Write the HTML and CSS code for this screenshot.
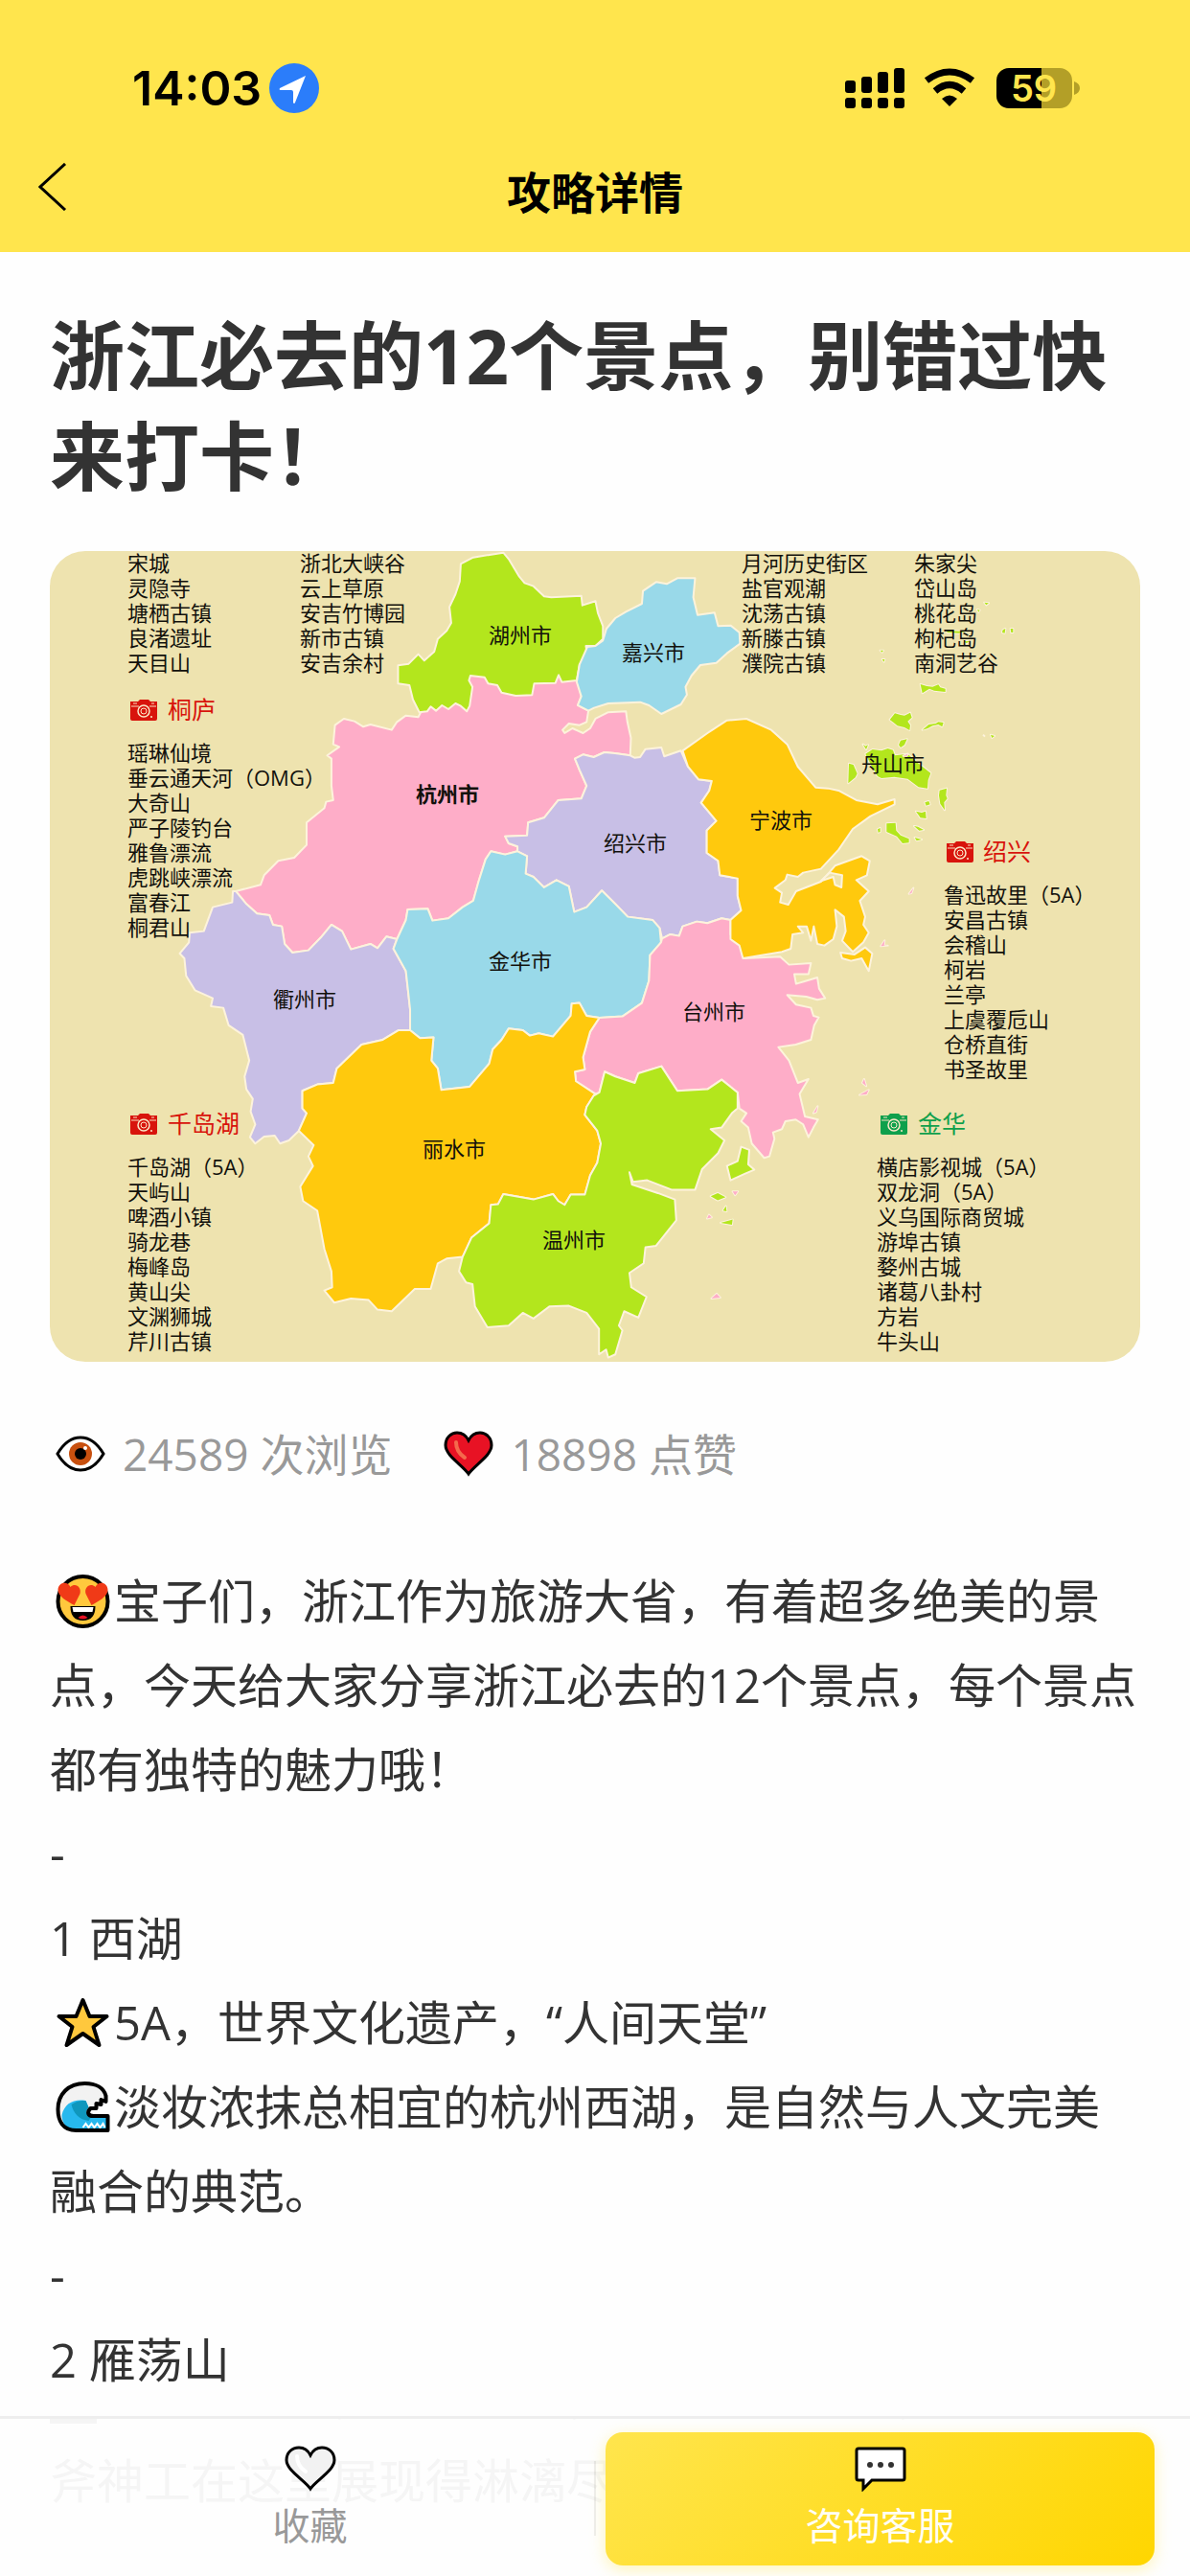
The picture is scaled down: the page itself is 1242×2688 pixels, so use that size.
FILE: index.html
```html
<!DOCTYPE html>
<html lang="zh-CN">
<head>
    <meta charset="UTF-8">
    <meta name="viewport" content="width=device-width, initial-scale=1.0">
    <title>攻略详情</title>
    <link rel="stylesheet" href="styles.css">
</head>
<body>
<div class="page">
    <header class="header">
        <div class="status-bar">
            <div class="status-left">
                <span class="time">14:03</span>
                <svg class="location-icon" viewBox="0 0 52 52">
                    <circle cx="26" cy="26" r="26" fill="#2b7dfa"/>
                    <path d="M38 13L11 26q-1 2 1 2h11q2 0 2 2v11q1 2 2 0z" fill="#fff"/>
                </svg>
            </div>
            <svg class="status-icons" viewBox="0 0 246 46">
                <g fill="#000">
                    <rect x="0" y="15" width="11" height="13" rx="3"/>
                    <rect x="17" y="11" width="11" height="17" rx="3"/>
                    <rect x="34" y="6" width="11" height="22" rx="3"/>
                    <rect x="51" y="2" width="11" height="26" rx="3"/>
                    <rect x="0" y="33" width="11" height="11" rx="3"/>
                    <rect x="17" y="33" width="11" height="11" rx="3"/>
                    <rect x="34" y="33" width="11" height="11" rx="3"/>
                    <rect x="51" y="33" width="11" height="11" rx="3"/>
                    <path d="M109 42l-8-8q8-7 16 0z"/>
                </g>
                <g fill="none" stroke="#000" stroke-width="7">
                    <path d="M85 15q24-18 48 0"/>
                    <path d="M94 26q15-13 30 0"/>
                </g>
                <path d="M171 2h34v42h-34a13 13 0 0 1-13-13v-16a13 13 0 0 1 13-13z" fill="#000"/>
                <path d="M205 2h19a13 13 0 0 1 13 13v16a13 13 0 0 1-13 13h-19zM239 16q6 2 6 7t-6 7z" fill="#b39f27"/>
                <text class="battery-text" x="197" y="37" text-anchor="middle">59</text>
            </svg>
        </div>
        <div class="nav-bar">
            <button type="button" class="back-btn" aria-label="返回">
                <svg viewBox="0 0 30 50"><path d="M28 1L2 25l26 24" fill="none" stroke="#000" stroke-width="3"/></svg>
            </button>
            <span class="nav-title">攻略详情</span>
        </div>
    </header>

    <main class="content">
        <h1 class="title">浙江必去的12个景点，别错过快来打卡！</h1>

        <svg class="map" viewBox="52 575 1138 846" role="img" aria-label="浙江景点地图">
            <defs>
                <symbol id="camera" viewBox="0 0 28 22">
                    <path d="M0 2h8l2-2h9l2 2h7v18q0 2-2 2h-24q-2 0-2-2z" fill="currentColor"/>
                    <path d="M1 7h8m11 0h7M3 4h4m15 0h3" stroke="#f8e0c0" stroke-width="1"/>
                    <circle cx="14" cy="12" r="6" fill="none" stroke="#fbe9c9" stroke-width="1.5"/>
                    <circle cx="14" cy="12" r="3" fill="none" stroke="#fbe9c9"/>
                    <circle cx="22" cy="18" r="1" fill="#fbe9c9"/>
                </symbol>
            </defs>
            <rect x="52" y="575" width="1138" height="846" fill="#eee3af"/>

            <g class="regions" transform="translate(50 570) scale(.3699 .3333)">
                <!-- 杭州 -->
                <path class="pink" d="M805 620L810 560 835 540 865 548 890 565 910 558 970 575 985 550 1010 530 1045 535 1052 520 1090 460 1200 390 1490 400 1505 470 1495 498 1525 515 1520 550 1500 560 1470 555 1452 575 1458 585 1480 570 1510 585 1530 570 1545 540 1580 520 1631 517 1635 550 1645 600 1643 655 1600 648 1570 645 1540 660 1510 652 1487 665 1500 700 1520 750 1505 790 1440 795 1400 850 1355 865 1352 905 1290 908 1300 930 1325 940 1325 955 1290 965 1250 955 1235 980 1215 1050 1200 1110 1170 1130 1130 1165 1085 1172 1072 1135 1015 1137 1010 1170 985 1230 955 1222 930 1258 910 1245 855 1262 830 1205 800 1185 770 1225 735 1265 690 1272 668 1245 660 1190 635 1185 625 1155 590 1150 560 1120 530 1080 600 1060 610 1030 650 985 695 975 730 935 730 865 780 820 785 800 805 795 800 750 800 665 788 655 822 628z"/>
                <!-- 湖州 -->
                <path class="green" d="M1165 55L1200 35 1285 20 1300 40 1330 95 1345 115 1370 125 1400 157 1420 160 1505 155 1508 185 1545 172 1552 210 1566 250 1566 290 1545 312 1518 312 1522 340 1500 370 1492 420 1450 425 1441 403 1432 428 1372 430 1366 466 1320 468 1280 458 1268 435 1242 430 1232 410 1192 405 1188 420 1198 440 1190 500 1182 517 1165 500 1150 492 1130 510 1112 498 1095 515 1080 502 1070 517 1048 520 1030 480 1020 435 988 430 988 373 1018 368 1045 338 1062 358 1090 330 1100 290 1125 265 1138 240 1133 190 1150 150 1162 110z"/>
                <!-- 嘉兴 -->
                <path class="blue" d="M1576 258L1601 225 1631 205 1676 180 1679 140 1716 112 1746 118 1776 100 1826 100 1821 160 1833 215 1881 208 1891 250 1926 248 1951 270 1953 305 1916 335 1886 365 1841 372 1816 405 1799 440 1803 465 1786 495 1731 525 1696 498 1671 488 1581 492 1541 506 1525 515 1495 498 1505 470 1492 425 1500 370 1522 315 1545 312 1566 295z"/>
                <!-- 绍兴 -->
                <path class="purple" d="M1487 665L1510 652 1540 660 1570 645 1600 648 1643 655 1655 662 1671 660 1686 635 1731 630 1739 658 1786 640 1806 690 1836 730 1873 735 1866 765 1843 803 1886 860 1859 890 1859 960 1891 985 1896 1030 1946 1040 1946 1095 1956 1140 1926 1170 1901 1165 1861 1180 1831 1175 1791 1190 1781 1220 1756 1215 1733 1228 1726 1195 1706 1170 1636 1160 1601 1120 1563 1078 1520 1130 1485 1145 1470 1065 1435 1045 1400 1068 1370 1035 1348 1025 1352 970 1325 955 1325 940 1300 930 1290 908 1352 905 1355 865 1400 850 1440 795 1505 790 1520 750 1500 700z"/>
                <!-- 衢州 -->
                <path class="purple" d="M530 1080L560 1120 590 1150 625 1155 635 1185 660 1190 668 1245 690 1272 735 1265 770 1225 800 1185 830 1205 855 1262 910 1245 930 1258 955 1222 985 1230 975 1260 1010 1330 1015 1380 1022 1450 1022 1515 990 1515 945 1545 885 1560 815 1635 805 1680 760 1685 718 1705 718 1760 730 1775 708 1830 680 1860 655 1870 640 1845 610 1848 585 1870 570 1850 585 1810 572 1770 578 1730 560 1700 555 1660 568 1610 550 1530 510 1500 495 1445 460 1440 465 1415 415 1390 390 1345 385 1290 372 1275 398 1240 400 1210 440 1205 465 1130 520 1115 522 1080z"/>
                <!-- 金华 -->
                <path class="blue" d="M1250 955L1290 965 1325 955 1352 970 1348 1025 1370 1035 1400 1068 1435 1045 1470 1065 1485 1145 1520 1130 1563 1078 1601 1120 1636 1160 1706 1170 1726 1195 1730 1240 1699 1280 1696 1360 1676 1430 1621 1472 1556 1476 1520 1470 1500 1430 1478 1432 1475 1470 1425 1535 1385 1525 1360 1532 1340 1515 1300 1510 1280 1545 1255 1575 1245 1620 1190 1692 1110 1702 1100 1635 1082 1610 1088 1538 1050 1540 1022 1515 1022 1450 1015 1380 1010 1330 975 1260 985 1230 1010 1170 1015 1137 1072 1135 1085 1172 1130 1165 1170 1130 1200 1110 1215 1050 1235 980z"/>
                <!-- 台州 -->
                <path class="pink" d="M1556 1476L1621 1472 1676 1430 1696 1360 1699 1280 1730 1240 1733 1228 1756 1215 1781 1220 1791 1190 1831 1175 1861 1180 1901 1165 1926 1170 1926 1215 1950 1240 1966 1290 2066 1285 2091 1310 2153 1305 2146 1340 2106 1340 2111 1370 2135 1362 2171 1350 2176 1385 2193 1415 2171 1420 2140 1410 2086 1405 2111 1435 2153 1445 2160 1470 2175 1475 2162 1500 2153 1545 2110 1560 2061 1568 2091 1610 2116 1680 2146 1668 2121 1715 2136 1785 2173 1795 2160 1820 2146 1850 2131 1810 2110 1795 2081 1800 2071 1825 2046 1835 2050 1855 2036 1910 2021 1915 1986 1870 1976 1820 1956 1800 1971 1775 1951 1760 1946 1710 1901 1670 1861 1700 1776 1705 1731 1628 1666 1650 1656 1680 1601 1660 1571 1645 1556 1710 1545 1715 1490 1675 1487 1645 1515 1638 1510 1600 1530 1520z"/>
                <!-- 丽水 -->
                <path class="orange" d="M1022 1515L1050 1540 1088 1538 1082 1610 1100 1635 1110 1702 1190 1692 1245 1620 1255 1575 1280 1545 1300 1510 1340 1515 1360 1532 1385 1525 1425 1535 1475 1470 1478 1432 1500 1430 1520 1470 1556 1476 1530 1520 1510 1600 1515 1638 1487 1645 1490 1675 1545 1715 1540 1720 1520 1755 1515 1780 1550 1830 1560 1870 1550 1930 1530 1970 1515 2030 1475 2030 1458 2062 1440 2050 1425 2028 1370 2045 1285 2028 1270 2060 1250 2062 1245 2120 1195 2165 1170 2225 1125 2230 1100 2245 1080 2325 1035 2325 970 2395 930 2390 905 2360 855 2355 808 2368 780 2330 802 2320 800 2270 780 2200 760 2080 720 2050 712 2005 748 1940 735 1910 750 1875 708 1830 730 1775 718 1760 718 1705 760 1685 805 1680 815 1635 885 1560 945 1545 990 1515z"/>
                <!-- 温州 -->
                <path class="green" d="M1571 1645L1601 1660 1656 1680 1666 1650 1731 1628 1776 1705 1861 1700 1901 1670 1946 1710 1946 1760 1930 1775 1901 1820 1870 1825 1909 1860 1891 1900 1846 1950 1826 2015 1761 2015 1691 1985 1651 1990 1641 1960 1648 1998 1721 2025 1769 2045 1773 2110 1716 2190 1686 2195 1681 2245 1641 2275 1646 2320 1689 2350 1666 2415 1626 2395 1611 2440 1621 2455 1601 2530 1581 2540 1575 2515 1555 2530 1555 2450 1520 2400 1470 2378 1415 2380 1370 2418 1340 2400 1300 2440 1240 2445 1205 2380 1198 2310 1180 2305 1160 2270 1170 2225 1195 2165 1245 2120 1250 2062 1270 2060 1285 2028 1370 2045 1425 2028 1440 2050 1458 2062 1475 2030 1515 2030 1530 1970 1550 1930 1560 1870 1550 1830 1515 1780 1520 1755 1540 1720 1556 1710z"/>
                <path class="green" d="M1956 1880L1979 1890 1976 1935 1993 1952 1966 1965 1926 1985 1916 1940 1946 1925z"/>
                <!-- 宁波 -->
                <g transform="translate(1541)">
                    <path class="orange" d="M250 640L320 585 375 545 430 540 500 575 545 620 575 690 625 755 660 758 690 765 740 795 800 808 848 792 848 808 780 845 730 885 690 950 640 1010 590 1022 575 1035 545 1028 540 1045 510 1070 530 1085 525 1115 548 1122 570 1080 640 1050 665 1020 680 1000 755 970 778 985 770 1030 740 1045 760 1065 775 1080 750 1110 765 1160 760 1185 775 1210 760 1240 730 1270 700 1235 710 1205 705 1160 680 1138 685 1190 675 1230 650 1250 630 1245 620 1190 612 1235 600 1190 575 1190 590 1210 560 1215 555 1260 530 1270 420 1290 410 1250 385 1230 385 1170 415 1140 405 1095 405 1040 355 1030 350 985 318 960 318 890 345 860 302 803 325 765 332 735 295 730 265 690z"/>
                    <path class="orange" d="M695 1272L735 1278 765 1256 785 1275 775 1330 755 1290 725 1298 700 1290z"/>
                    <path class="cream" d="M665 1022L700 1030 698 1068 680 1060 675 1035 640 1048z"/>
                </g>
                <g class="islets">
                    <path class="green" d="M1870 2035L1890 2025 1912 2038 1890 2048zM1898 2118L1932 2108 1930 2124zM1905 2080l8-14 2 16z"/>
                    <path class="pink" d="M1860 2105l5-12 8 8zM1932 2020l15 0-8 12zM1872 2355l15-15 10 12zM2298 1680l5-12 6 22zM2290 1718l26-16-6 14zM2160 1775l12-22-4 18z"/>
                </g>
            </g>

            <!-- 舟山 -->
            <g class="regions islets" transform="translate(860 600) scale(.3333)">
                <path class="green" d="M302 342L322 348 340 350 358 343 364 352 380 356 380 366 345 362 330 356 308 370zM206 453L222 433 240 438 252 440 270 431 275 446 262 458 270 470 268 486 252 477 230 472 215 460zM308 485L328 468 350 465 358 460 374 462 370 475 358 468 340 472 325 480zM234 532L240 518 260 514 252 532 240 540zM122 530l8 6 8-4-6 14z"/>
                <path class="green" d="M130 560L152 546 180 550 200 543 216 548 222 565 262 560 296 590 334 620 326 642 324 668 296 664 262 638 220 632 180 636 168 630 150 600zM78 590L92 594 104 622 98 634 76 652z"/>
                <path class="green" d="M362 674L384 668 382 690 386 700 376 712 378 736 364 716 360 690zM196 778L224 776 226 800 240 815 266 826 266 838 246 840 228 818 196 804zM288 740l18 4 12-4 2 22-18-2zM316 712l12-4 4 10-12 4zM282 786l12 2 18 10-14 2zM284 822l22 6-16 4zM168 796l8-4 0 12-6 2zM502 86l14 2-8 6zM480 108l8 2-4 6zM560 172l8-4-2 14-8-2zM584 168l8 0 0 12-6 0zM176 236l10 0-4 6zM182 264l8 0-2 8zM498 500l6 6M522 500l12 4-8 6zM384 174l60 3-22 5-36-2zM438 208l20-2-12 8z"/>
                <path class="pink" d="M266 998l14-18-6 16zM178 1162l12-18-2 16 12 0zM248 566l14-6-2 6z"/>
            </g>

            <g class="city" text-anchor="middle">
                <text x="543" y="671">湖州市</text>
                <text x="467" y="837" class="capital">杭州市</text>
                <text x="682" y="689">嘉兴市</text>
                <text x="663" y="888">绍兴市</text>
                <text x="815" y="864">宁波市</text>
                <text x="932" y="805">舟山市</text>
                <text x="318" y="1051">衢州市</text>
                <text x="543" y="1011">金华市</text>
                <text x="745" y="1064">台州市</text>
                <text x="474" y="1207">丽水市</text>
                <text x="599" y="1302">温州市</text>
            </g>

            <g class="spots">
                <text><tspan x="133" y="596">宋城</tspan><tspan x="133" dy="26">灵隐寺</tspan><tspan x="133" dy="26">塘栖古镇</tspan><tspan x="133" dy="26">良渚遗址</tspan><tspan x="133" dy="26">天目山</tspan></text>
                <text><tspan x="313" y="596">浙北大峡谷</tspan><tspan x="313" dy="26">云上草原</tspan><tspan x="313" dy="26">安吉竹博园</tspan><tspan x="313" dy="26">新市古镇</tspan><tspan x="313" dy="26">安吉余村</tspan></text>
                <text><tspan x="774" y="596">月河历史街区</tspan><tspan x="774" dy="26">盐官观潮</tspan><tspan x="774" dy="26">沈荡古镇</tspan><tspan x="774" dy="26">新滕古镇</tspan><tspan x="774" dy="26">濮院古镇</tspan></text>
                <text><tspan x="954" y="596">朱家尖</tspan><tspan x="954" dy="26">岱山岛</tspan><tspan x="954" dy="26">桃花岛</tspan><tspan x="954" dy="26">枸杞岛</tspan><tspan x="954" dy="26">南洞艺谷</tspan></text>
                <text><tspan x="133" y="794">瑶琳仙境</tspan><tspan x="133" dy="26">垂云通天河（OMG）</tspan><tspan x="133" dy="26">大奇山</tspan><tspan x="133" dy="26">严子陵钓台</tspan><tspan x="133" dy="26">雅鲁漂流</tspan><tspan x="133" dy="26">虎跳峡漂流</tspan><tspan x="133" dy="26">富春江</tspan><tspan x="133" dy="26">桐君山</tspan></text>
                <text><tspan x="985" y="942">鲁迅故里（5A）</tspan><tspan x="985" dy="26">安昌古镇</tspan><tspan x="985" dy="26">会稽山</tspan><tspan x="985" dy="26">柯岩</tspan><tspan x="985" dy="26">兰亭</tspan><tspan x="985" dy="26">上虞覆卮山</tspan><tspan x="985" dy="26">仓桥直街</tspan><tspan x="985" dy="26">书圣故里</tspan></text>
                <text><tspan x="133" y="1226">千岛湖（5A）</tspan><tspan x="133" dy="26">天屿山</tspan><tspan x="133" dy="26">啤酒小镇</tspan><tspan x="133" dy="26">骑龙巷</tspan><tspan x="133" dy="26">梅峰岛</tspan><tspan x="133" dy="26">黄山尖</tspan><tspan x="133" dy="26">文渊狮城</tspan><tspan x="133" dy="26">芹川古镇</tspan></text>
                <text><tspan x="915" y="1226">横店影视城（5A）</tspan><tspan x="915" dy="26">双龙洞（5A）</tspan><tspan x="915" dy="26">义乌国际商贸城</tspan><tspan x="915" dy="26">游埠古镇</tspan><tspan x="915" dy="26">婺州古城</tspan><tspan x="915" dy="26">诸葛八卦村</tspan><tspan x="915" dy="26">方岩</tspan><tspan x="915" dy="26">牛头山</tspan></text>
            </g>

            <g class="group red">
                <use href="#camera" x="136" y="730" width="28" height="22"/>
                <text x="175" y="750">桐庐</text>
                <use href="#camera" x="988" y="878" width="28" height="22"/>
                <text x="1026" y="898">绍兴</text>
                <use href="#camera" x="136" y="1162" width="28" height="22"/>
                <text x="175" y="1182">千岛湖</text>
            </g>
            <g class="group teal">
                <use href="#camera" x="919" y="1162" width="28" height="22"/>
                <text x="958" y="1182">金华</text>
            </g>
        </svg>

        <div class="stats">
            <span class="stat">
                <svg class="stat-icon" viewBox="0 0 52 48">
                    <path d="M2 24Q12 7 26 7t24 17Q40 41 26 41T2 24z" fill="#fff" stroke="#000" stroke-width="3"/>
                    <circle cx="26" cy="24" r="12" fill="#c8500f"/>
                    <circle cx="26" cy="24" r="6" fill="#000"/>
                    <circle cx="31" cy="18" r="2" fill="#fff"/>
                </svg>
                24589 次浏览
            </span>
            <span class="stat">
                <svg class="stat-icon" viewBox="0 0 52 48">
                    <path d="M26 45C20 36 2 26 2 15C2 7 8 2 14 2q8 0 12 8q4-8 12-8c6 0 12 5 12 13c0 11-18 21-24 30z" fill="#e81224" stroke="#000" stroke-width="3"/>
                    <path d="M13 12q0 10 9 16" fill="none" stroke="#f4694c" stroke-width="4" stroke-linecap="round"/>
                </svg>
                18898 点赞
            </span>
        </div>

        <article class="article">
            <p><svg class="emoji" viewBox="0 0 66 60">
                <circle cx="34" cy="30" r="26" fill="#ffc83d" stroke="#000" stroke-width="4"/>
                <path d="M25 34C18 30 8 25 8 18c0-8 10-10 13-3c5-5 12 0 10 7zM43 34c7-4 17-9 17-16c0-8-10-10-13-3c-5-5-12 0-10 7z" fill="#f03a17"/>
                <path d="M21 35h26q0 15-13 15T21 35z" fill="#000"/>
                <path d="M23 36h22l-1 5H24z" fill="#fff"/>
                <path d="M29 47q5-5 10 0-5 3-10 0z" fill="#e81224"/>
            </svg>宝子们，浙江作为旅游大省，有着超多绝美的景点，今天给大家分享浙江必去的12个景点，每个景点都有独特的魅力哦！</p>
            <p>-</p>
            <p>1 西湖</p>
            <p><svg class="emoji" viewBox="0 0 66 60">
                <path d="M34 6l7 17h18L45 34l6 19-17-12-17 12 6-19L9 23h18z" fill="#ffc83d" stroke="#000" stroke-width="4" stroke-linejoin="round"/>
            </svg>5A，世界文化遗产，“人间天堂”</p>
            <p><svg class="emoji" viewBox="0 0 66 60">
                <path d="M59 54H27C13 54 8 44 8 32C8 16 19 5 36 5c12 0 21 5 22 14l-7 4-2 6-9 1c-4 4-3 8 4 8h15z" fill="#f2f2f2"/>
                <path d="M12 38c3-12 12-17 25-15l3 7c-4 4-3 8 4 8h15v16H27C18 54 12 47 12 38z" fill="#27b8ee"/>
                <path d="M22 27c6-4 10-4 15-4l3 7c-4 4-3 8 4 8l-4 6c-10-1-16-8-18-17z" fill="#0f97bd"/>
                <path d="M34 51l3-4 3 4 3-4 3 4 3-4 3 4 3-4 2 4" fill="none" stroke="#fff" stroke-width="2"/>
                <path d="M60 54H27C13 54 8 44 8 32C8 16 19 5 36 5c12 0 20 5 22 13l0 6-5-2v5l-5-1v5l-6 0c-4 4-3 8 3 8h15z" fill="none" stroke="#000" stroke-width="4" stroke-linejoin="round"/>
            </svg>淡妆浓抹总相宜的杭州西湖，是自然与人文完美融合的典范。</p>
            <p>-</p>
            <p>2 雁荡山</p>
        </article>
    </main>

    <footer class="action-bar">
        <div class="underlay" aria-hidden="true"><span class="block"></span>因山顶有湖，芦苇茂密，秋雁宿之得名，自然的鬼斧神工在这里展现得淋漓尽致。</div>
        <button type="button" class="action">
            <svg class="action-icon" viewBox="0 0 54 48">
                <path d="M27 45C21 36 2 26 2 15C2 7 8 2 15 2q8 0 12 8q4-8 12-8c7 0 13 5 13 13c0 11-19 21-25 30z" fill="#f2f2f2" stroke="#000" stroke-width="3"/>
                <path d="M13 11q0 10 9 16" fill="none" stroke="#fff" stroke-width="4" stroke-linecap="round"/>
            </svg>
            <span>收藏</span>
        </button>
        <span class="divider"></span>
        <button type="button" class="action primary">
            <svg class="action-icon" viewBox="0 0 54 48">
                <path d="M4 3h46q2 0 2 2v29q0 2-2 2H18l-9 9v-9H4q-2 0-2-2V5q0-2 2-2z" fill="#fff" stroke="#000" stroke-width="3"/>
                <g fill="#333"><circle cx="16" cy="20" r="3"/><circle cx="27" cy="20" r="3"/><circle cx="38" cy="20" r="3"/></g>
            </svg>
            <span>咨询客服</span>
        </button>
    </footer>
</div>
</body>
</html>
```

FILE: styles.css
```css
* {
    box-sizing: border-box;
}

body {
    margin: 0;
    font-family: "Open Sans", "Noto Sans CJK SC", sans-serif;
    background-color: #fefefe;
    color: #333;
}

button {
    border: none;
    padding: 0;
    background: none;
    font-family: inherit;
    cursor: pointer;
}

.page {
    display: flex;
    flex-direction: column;
    height: 100vh;
}

/* header */
.header {
    flex-shrink: 0;
    background-color: #ffe54d;
    color: #000;
    padding-bottom: 22px;
}

.status-bar {
    display: flex;
    justify-content: space-between;
    align-items: center;
    padding: 66px 114px 0 138px;
}

.status-left {
    display: flex;
    align-items: center;
    gap: 8px;
}

.time {
    font-family: Inter, sans-serif;
    font-size: 50px;
    line-height: 52px;
    font-weight: 600;
}

.location-icon {
    width: 52px;
    height: 52px;
}

.status-icons {
    width: 246px;
    height: 46px;
}

.battery-text {
    font-family: Inter, sans-serif;
    font-size: 38px;
    font-weight: 600;
    fill: #ffe54d;
}

.nav-bar {
    position: relative;
    display: flex;
    justify-content: center;
    align-items: center;
    height: 123px;
    padding-top: 40px;
}

.back-btn {
    position: absolute;
    left: 40px;
    top: 52px;
    height: 50px;
}

.back-btn svg {
    width: 30px;
    height: 50px;
}

.nav-title {
    font-size: 46px;
    line-height: 60px;
    font-weight: bold;
}

/* content */
.content {
    flex: 1;
    min-height: 0;
    overflow: hidden;
    padding: 56px 52px 0;
}

.title {
    margin: 0 0 46px;
    font-size: 78px;
    line-height: 105px;
    font-weight: bold;
}

.map {
    display: block;
    width: 100%;
    border-radius: 37px;
}

.regions path {
    stroke: #fdf3dc;
    stroke-width: 2;
    stroke-linejoin: round;
    vector-effect: non-scaling-stroke;
}

.islets path {
    paint-order: stroke;
}

.pink { fill: #feadc8; }
.green { fill: #b3e61d; }
.blue { fill: #99d9e9; }
.purple { fill: #c8bfe6; }
.orange { fill: #ffc90d; }
.cream { fill: #eee3af; }

.city text,
.spots text {
    font-size: 22px;
    fill: #12110c;
}

.city .capital {
    font-weight: bold;
}

.group text {
    font-size: 25px;
    fill: currentColor;
}

.red { color: #d8140c; }
.teal { color: #0fa04c; }

.stats {
    display: flex;
    gap: 48px;
    margin-top: 66px;
    font-size: 46px;
    line-height: 60px;
    color: #999;
}

.stat {
    display: flex;
    align-items: center;
    gap: 18px;
    padding-left: 6px;
}

.stat-icon {
    width: 52px;
    height: 48px;
}

.article {
    margin-top: 79px;
    font-size: 49px;
    line-height: 88px;
}

.article p {
    margin: 0;
}

.emoji {
    width: 67px;
    height: 60px;
    vertical-align: -12px;
}

/* bottom bar */
.action-bar {
    position: relative;
    flex-shrink: 0;
    display: flex;
    align-items: center;
    gap: 10px;
    height: 167px;
    padding: 2px 37px 0;
    border-top: 3px solid #eee;
    background-color: #fefefe;
}

.underlay {
    position: absolute;
    inset: 0;
    overflow: hidden;
    padding: 0 52px;
    font-size: 49px;
    line-height: 88px;
    margin-top: -68px;
    clip-path: inset(68px 0 0 0);
    opacity: 0.04;
}

.block {
    display: inline-block;
    width: 49px;
    height: 49px;
    background-color: #333;
    vertical-align: -10px;
}

.action {
    position: relative;
    flex: 1;
    display: flex;
    flex-direction: column;
    align-items: center;
    justify-content: center;
    gap: 8px;
    height: 139px;
    border-radius: 18px;
    font-size: 39px;
    line-height: 54px;
    color: #999;
}

.action-icon {
    width: 54px;
    height: 48px;
}

.primary {
    background: linear-gradient(135deg, #ffe54d, #ffd600);
    box-shadow: 0 4px 16px rgba(255, 229, 77, 0.4);
    color: #fffef5;
}

.divider {
    width: 2px;
    height: 78px;
    background-color: #eee;
}
```
